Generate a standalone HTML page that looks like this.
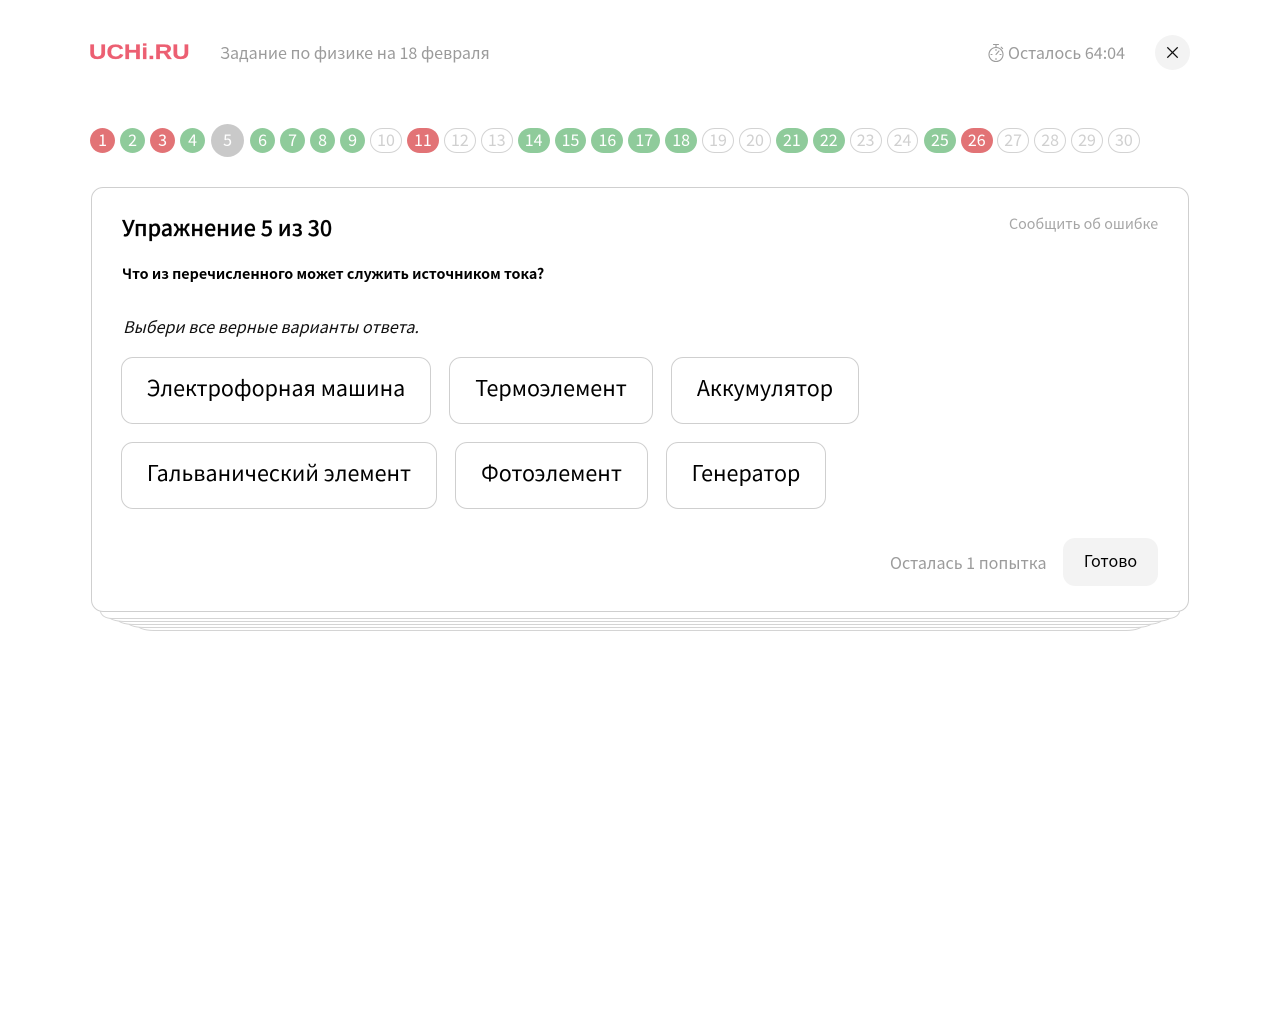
<!DOCTYPE html>
<html lang="ru">
<head>
<meta charset="utf-8">
<title>Задание по физике</title>
<style>
html,body{margin:0;padding:0;background:#fff;width:1280px;height:1024px;overflow:hidden}
body{position:relative;font-family:"Noto Sans CJK JP","Noto Sans CJK SC","Liberation Sans",sans-serif;color:#000}
.a{position:absolute;white-space:nowrap}
.logo{left:89px;top:38px;font:bold 21px/30px "Liberation Sans",sans-serif;color:#ec5f72;transform:scaleX(1.15);transform-origin:0 50%;-webkit-text-stroke:.2px #ec5f72}
.sub{left:220px;top:39px;font-size:16.1px;line-height:26px;color:#9b9b9b}
.timer{left:1008px;top:39px;font-size:16.1px;line-height:26px;color:#9b9b9b}
.close{left:1155px;top:35px;width:35px;height:35px;border-radius:50%;background:#f3f3f3}
.pills{left:90.1px;top:124px;height:33px;display:flex;align-items:center;gap:5px}
.p{box-sizing:border-box;height:25px;min-width:25px;border-radius:13px;font-size:16px;line-height:23px;text-align:center;color:#fff}
.g{background:#8fcb9b}
.r{background:#e27376}
.e{border:1px solid #d3d3d3;color:#d0d0d0;line-height:21px;width:31.9px}
.w{width:31.9px}
.c{background:#c9c9c9;width:33px;height:33px;border-radius:50%;line-height:31px;margin:0 1px}
.card{box-sizing:border-box;left:91px;top:187px;width:1098px;height:425px;border:1px solid #cfcfcf;border-radius:12px;background:#fff}
.l{box-sizing:border-box;border:1px solid #d4d4d4;border-top:0;background:#fff;top:606px;border-radius:0 0 18px 18px/0 0 7px 7px}
.title{left:122px;top:212px;font-size:21.5px;line-height:32px;font-weight:500;color:#000;-webkit-text-stroke:.2px #000}
.report{left:1009px;top:213px;font-size:14.3px;line-height:22px;color:#a6a6a6}
.q{left:122px;top:263px;font-size:14.3px;line-height:22px;font-weight:700}
.hint{left:123px;top:314px;font-size:16.1px;line-height:24px;font-style:italic;color:#111}
.b{box-sizing:border-box;height:67px;border:1px solid #cfcfcf;border-radius:12px;font-size:21.5px;line-height:60px;text-align:center;background:#fff;color:#000}
.left{left:890px;top:549px;font-size:16.1px;line-height:26px;color:#9b9b9b}
.done{left:1063px;top:538px;width:95px;height:48px;border-radius:12px;background:#f3f3f3;font-size:16.1px;line-height:45px;text-align:center;color:#000}
</style>
</head>
<body>
<div class="a logo">UCHi.RU</div>
<div class="a sub">Задание по физике на 18 февраля</div>
<svg class="a" style="left:987px;top:43px" width="18" height="20" viewBox="0 0 18 20" fill="none" stroke="#9b9b9b" stroke-width="1.1" stroke-linecap="round"><circle cx="9" cy="11.5" r="7"/><path d="M6.5 1.5h5M9 1.5v3M14.2 4.2l1.4 1.4M9 11.5l3-3.5M9 6.5v1M4 11.5h1M13 11.5h1M9 15.5v1"/></svg>
<div class="a timer">Осталось 64:04</div>
<div class="a close"><svg width="35" height="35" viewBox="0 0 35 35" fill="none" stroke="#111" stroke-width="1.3"><path d="M12.3 12.3l10.4 10.4M22.7 12.3l-10.4 10.4"/></svg></div>
<div class="a pills">
<div class="p r">1</div><div class="p g">2</div><div class="p r">3</div><div class="p g">4</div><div class="p c">5</div><div class="p g">6</div><div class="p g">7</div><div class="p g">8</div><div class="p g">9</div><div class="p e">10</div><div class="p r w">11</div><div class="p e">12</div><div class="p e">13</div><div class="p g w">14</div><div class="p g w">15</div><div class="p g w">16</div><div class="p g w">17</div><div class="p g w">18</div><div class="p e">19</div><div class="p e">20</div><div class="p g w">21</div><div class="p g w">22</div><div class="p e">23</div><div class="p e">24</div><div class="p g w" style="margin-left:.5px">25</div><div class="p r w">26</div><div class="p e" style="margin-left:-.5px">27</div><div class="p e">28</div><div class="p e">29</div><div class="p e">30</div>
</div>
<div class="a l" style="left:136px;width:1008px;height:25px"></div>
<div class="a l" style="left:126px;width:1028px;height:22px"></div>
<div class="a l" style="left:116px;width:1048px;height:19px"></div>
<div class="a l" style="left:107px;width:1066px;height:16px"></div>
<div class="a l" style="left:100px;width:1080px;height:13px;border-radius:0 0 12px 12px/0 0 8px 8px"></div>
<div class="a card"></div>
<div class="a title">Упражнение 5 из 30</div>
<div class="a report">Сообщить об ошибке</div>
<div class="a q">Что из перечисленного может служить источником тока?</div>
<div class="a hint">Выбери все верные варианты ответа.</div>
<div class="a b" style="left:121px;top:357px;width:310px">Электрофорная машина</div>
<div class="a b" style="left:449px;top:357px;width:204px">Термоэлемент</div>
<div class="a b" style="left:671px;top:357px;width:188px">Аккумулятор</div>
<div class="a b" style="left:121px;top:442px;width:316px">Гальванический элемент</div>
<div class="a b" style="left:455px;top:442px;width:193px">Фотоэлемент</div>
<div class="a b" style="left:666px;top:442px;width:160px">Генератор</div>
<div class="a left">Осталась 1 попытка</div>
<div class="a done">Готово</div>
</body>
</html>
